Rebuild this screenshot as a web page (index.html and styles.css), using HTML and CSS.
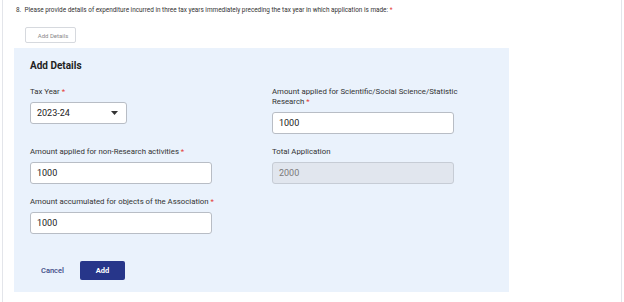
FILE: index.html
```html
<!DOCTYPE html>
<html lang="en">
<head>
  <meta charset="UTF-8">
  <title>Expenditure Details</title>
  <link rel="stylesheet" href="styles.css">
</head>
<body>
  <div class="page">
    <div class="question">8.&nbsp; Please provide details of expenditure incurred in three tax years immediately preceding the tax year in which application is made: <span class="req">*</span></div>
    <button class="add-details-btn">Add Details</button>

    <div class="details-panel">
      <div class="panel-title">Add Details</div>
      <div class="form-grid">
        <div class="field">
          <label class="field-label">Tax Year <span class="req">*</span></label>
          <div class="select-box">
            <span>2023-24</span>
            <svg width="7" height="4" viewBox="0 0 7 4"><path d="M0 0h7L3.5 4z" fill="#333"/></svg>
          </div>
        </div>
        <div class="field">
          <label class="field-label">Amount applied for Scientific/Social Science/Statistic Research <span class="req">*</span></label>
          <div class="input-box">1000</div>
        </div>
        <div class="field">
          <label class="field-label">Amount applied for non-Research activities <span class="req">*</span></label>
          <div class="input-box">1000</div>
        </div>
        <div class="field">
          <label class="field-label">Total Application</label>
          <div class="input-box disabled">2000</div>
        </div>
        <div class="field">
          <label class="field-label">Amount accumulated for objects of the Association <span class="req">*</span></label>
          <div class="input-box">1000</div>
        </div>
      </div>
      <div class="actions">
        <button class="btn-cancel">Cancel</button>
        <button class="btn-add">Add</button>
      </div>
    </div>
  </div>
</body>
</html>
```

FILE: styles.css
```css
body {
  margin: 0;
  background: #fff;
  font-family: Roboto, 'Liberation Sans', Arial, sans-serif;
  color: #333;
}
.page {
  margin: 0 2px;
  height: 302px;
  box-sizing: border-box;
  border-left: 1px solid #e3e5ea;
  border-right: 1px solid #e3e5ea;
  padding: 5px 0 0 13px;
}
.question {
  font-size: 6.4px;
  line-height: 10px;
  color: #333;
}
.req {
  color: #e53935;
}
.add-details-btn {
  display: block;
  margin: 12px 0 0 9px;
  width: 51px;
  height: 16px;
  padding: 0 0 0 5px;
  background: #fff;
  border: 1px solid #d6d9de;
  border-radius: 2px;
  font-family: inherit;
  font-size: 6px;
  color: #8a8a8a;
}
.details-panel {
  margin: 5px 0 0 -2px;
  width: 495px;
  box-sizing: border-box;
  background: #eaf2fc;
  padding: 12px 16px 12px 16px;
}
.panel-title {
  font-size: 10px;
  font-weight: 700;
  line-height: 12px;
  color: #222;
  margin-bottom: 15px;
}
.form-grid {
  display: grid;
  grid-template-columns: 182px 182px;
  column-gap: 60px;
  row-gap: 13px;
  align-items: start;
}
.field {
  display: flex;
  flex-direction: column;
  align-items: flex-start;
  gap: 5px;
}
.field-label {
  width: 196px;
  font-size: 7.8px;
  line-height: 10px;
  color: #333;
}
.select-box {
  width: 97px;
  height: 22px;
  box-sizing: border-box;
  background: #fff;
  border: 1px solid #b8bdc5;
  border-radius: 3px;
  padding: 0 8px 0 6px;
  display: flex;
  align-items: center;
  justify-content: space-between;
  font-size: 9px;
  color: #222;
}
.input-box {
  width: 182px;
  height: 22px;
  box-sizing: border-box;
  background: #fff;
  border: 1px solid #b8bdc5;
  border-radius: 3px;
  padding: 0 6px;
  display: flex;
  align-items: center;
  font-size: 9px;
  color: #222;
}
.input-box.disabled {
  background: #e1e6ee;
  border-color: #c6ccd5;
  color: #7a7a7a;
}
.actions {
  display: flex;
  align-items: center;
  gap: 5px;
  margin-top: 27px;
}
.btn-cancel {
  background: none;
  border: none;
  padding: 0 11px;
  height: 19px;
  font-family: inherit;
  font-size: 7.5px;
  font-weight: 500;
  color: #3d4a86;
}
.btn-add {
  width: 45px;
  height: 19px;
  background: #27368a;
  border: none;
  border-radius: 2px;
  font-family: inherit;
  font-size: 7.5px;
  font-weight: 700;
  color: #fff;
}
```
